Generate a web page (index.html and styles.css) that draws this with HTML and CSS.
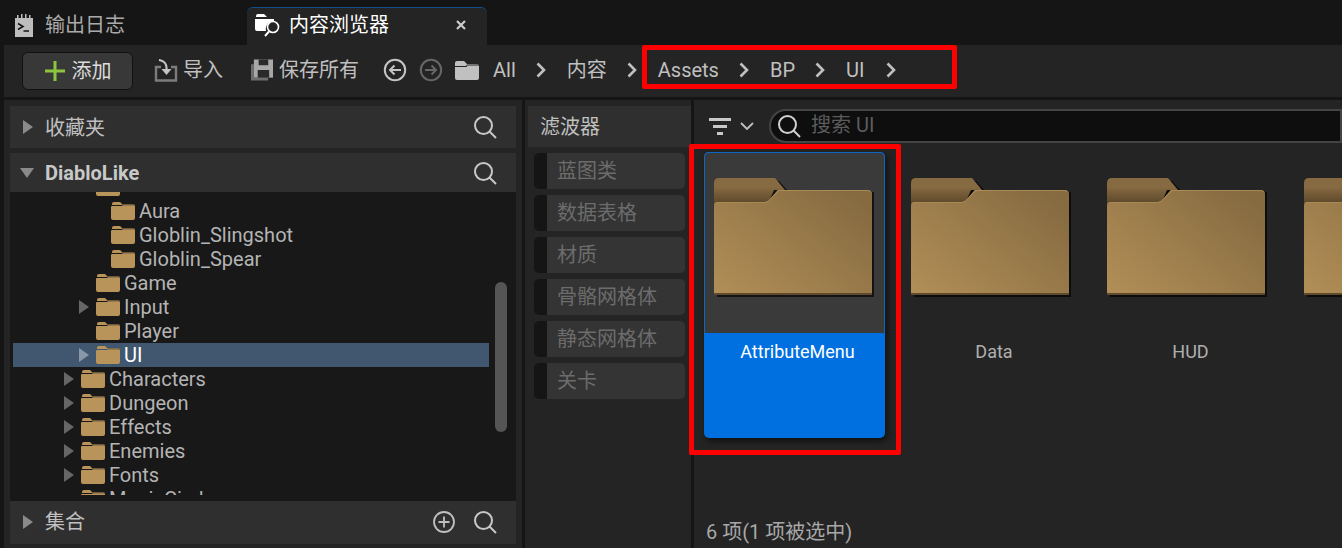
FILE: index.html
```html
<!DOCTYPE html>
<html lang="zh-CN">
<head>
    <meta charset="UTF-8">
    <meta name="viewport" content="width=device-width, initial-scale=1.0">
    <title>内容浏览器</title>
    <link rel="stylesheet" href="styles.css">
</head>
<body>
    <svg class="defs" aria-hidden="true">
        <defs>
            <linearGradient id="frontGrad" x1="0" y1="1" x2="1" y2="0.2">
                <stop offset="0" stop-color="#b28f57"/>
                <stop offset="1" stop-color="#866b41"/>
            </linearGradient>
            <linearGradient id="backGrad" x1="0" y1="0" x2="0" y2="1">
                <stop offset="0.35" stop-color="#866a41"/>
                <stop offset="1" stop-color="#594629"/>
            </linearGradient>
            <symbol id="bigFolder" viewBox="0 0 160 120">
                <path d="M2 119h158V14H74L64 3H5Q2 3 2 6z" fill="#000" opacity="0.65" transform="translate(1 0)"/>
                <path d="M0 5Q0 0 5 0H61L71 12H60L54 26H0z" fill="url(#backGrad)"/>
                <path d="M0 28Q0 24 4 24H51Q54 24 56 21L64 12H153Q158 12 158 17V117H0z" fill="url(#frontGrad)"/>
                <path d="M64 12H153Q158 12 158 17V18Q158 13 153 13H65L56 22Q54 25 51 25H4Q0 25 0 29V28Q0 24 4 24H51Q54 24 56 21z" fill="#a98a55"/>
                <rect x="0" y="115" width="158" height="2" fill="#5f4a2d"/>
            </symbol>
            <symbol id="treeFolder" viewBox="0 0 24 18">
                <path d="M1 2Q1 0 3 0H9L12 3H1z" fill="#b8945a"/>
                <path d="M0 5Q0 4 1 4H11L12.500 2.500H22Q24 2.500 24 4.500V16Q24 18 22 18H2Q0 18 0 16z" fill="#b8945a"/>
                <rect x="12" y="2.500" width="12" height="1" fill="#75603f"/>
            </symbol>
            <symbol id="search" viewBox="0 0 24 24">
                <circle cx="10.500" cy="10.500" r="8.500" fill="none" stroke="currentColor" stroke-width="2"/>
                <path d="M16.500 16.500L23 23" fill="none" stroke="currentColor" stroke-width="2"/>
            </symbol>
            <symbol id="chevron" viewBox="0 0 10 16">
                <path d="M1.500 1.500L8 8L1.500 14.500" fill="none" stroke="currentColor" stroke-width="2.600"/>
            </symbol>
        </defs>
    </svg>

    <div class="tabs">
        <div class="tab">
            <svg class="tab-icon" width="18" height="23" viewBox="0 0 18 23">
                <path d="M0 4H2V1H3.500V4H6V0H7.500V4H10V0H11.500V4H14V1H15.500V4H18V23H0z" fill="#bdbdbd"/>
                <path d="M3 9.500L8 12.500L3 15.500M8.500 17H14" fill="none" stroke="#151515" stroke-width="1.600"/>
            </svg>
            <span class="tab-name">输出日志</span>
        </div>
        <div class="tab active">
            <svg class="tab-icon" width="26" height="24" viewBox="0 0 26 24">
                <path d="M1 3Q1 1 3 1H9L12 4H1z" fill="#fff"/>
                <path d="M0 6H19V8A8 8 0 0 0 11 18H2Q0 18 0 16z" fill="#fff"/>
                <circle cx="18" cy="14" r="5.500" fill="none" stroke="#fff" stroke-width="1.600"/>
                <path d="M14 18.500L10 23" fill="none" stroke="#fff" stroke-width="2"/>
            </svg>
            <span class="tab-name">内容浏览器</span>
            <svg class="tab-close" width="10" height="10" viewBox="0 0 10 10">
                <path d="M1 1L9 9M9 1L1 9" fill="none" stroke="#ccc" stroke-width="2.200"/>
            </svg>
        </div>
    </div>

    <div class="toolbar">
        <button class="add-btn">
            <svg width="20" height="20" viewBox="0 0 20 20"><path d="M10 0V20M0 10H20" stroke="#8cc63f" stroke-width="3"/></svg>
            <span>添加</span>
        </button>
        <div class="tool import">
            <svg width="24" height="23" viewBox="0 0 24 23">
                <path d="M7 8H2V21.500H22V8H17" fill="none" stroke="#7c7c7c" stroke-width="2.400"/>
                <path d="M5 1C11 2 13 5 12.500 11" fill="none" stroke="#c4c4c4" stroke-width="2.200"/>
                <path d="M7.500 10H17.500L12.500 16z" fill="#c4c4c4"/>
            </svg>
            <span>导入</span>
        </div>
        <div class="tool save">
            <svg width="22" height="22" viewBox="0 0 23 22">
                <path d="M0 5H3V19H18V22H0z" fill="#6e6e6e"/>
                <path d="M3 0H23V19H3z" fill="#a8a8a8"/>
                <rect x="8" y="0" width="10" height="6" fill="#2a2a2a"/>
                <rect x="7" y="11" width="12" height="8" fill="#2a2a2a"/>
            </svg>
            <span>保存所有</span>
        </div>
        <svg class="nav back" width="24" height="24" viewBox="0 0 24 24">
            <circle cx="12" cy="12" r="10.200" fill="none" stroke="#c4c4c4" stroke-width="2"/>
            <path d="M18 12H7M11.500 7.500L7 12L11.500 16.500" fill="none" stroke="#c4c4c4" stroke-width="2"/>
        </svg>
        <svg class="nav forward" width="24" height="24" viewBox="0 0 24 24">
            <circle cx="12" cy="12" r="10.200" fill="none" stroke="#666" stroke-width="2"/>
            <path d="M6 12H17M12.500 7.500L17 12L12.500 16.500" fill="none" stroke="#666" stroke-width="2"/>
        </svg>
        <svg class="path-folder" width="24" height="19" viewBox="0 0 24 19">
            <path d="M0 2Q0 0 2 0H9L12 3H22Q24 3 24 5V17Q24 19 22 19H2Q0 19 0 17z" fill="#c0c0c0"/>
            <path d="M0 5H11L12 3.600H24V4.600H12.500L11.500 6H0z" fill="#242424"/>
        </svg>
        <nav class="crumbs">
            <span class="crumb">All</span><svg class="sep"><use href="#chevron"/></svg>
            <span class="crumb">内容</span><svg class="sep"><use href="#chevron"/></svg>
            <span class="crumb">Assets</span><svg class="sep"><use href="#chevron"/></svg>
            <span class="crumb">BP</span><svg class="sep"><use href="#chevron"/></svg>
            <span class="crumb">UI</span><svg class="sep"><use href="#chevron"/></svg>
        </nav>
        <div class="mark mark-path"></div>
    </div>

    <div class="workspace">
        <aside class="sources">
            <div class="section-head collapsed-head">
                <span class="arrow"></span>
                <span class="section-title">收藏夹</span>
                <svg class="head-icon"><use href="#search"/></svg>
            </div>
            <div class="section-head project-head">
                <span class="arrow down"></span>
                <span class="section-title project">DiabloLike</span>
                <svg class="head-icon"><use href="#search"/></svg>
            </div>
            <div class="tree">
                <div class="tree-rows">
                    <div class="row d2"><span class="twist none"></span><svg class="fold"><use href="#treeFolder"/></svg></div>
                    <div class="row d3"><span class="twist none"></span><svg class="fold"><use href="#treeFolder"/></svg><span>Aura</span></div>
                    <div class="row d3"><span class="twist none"></span><svg class="fold"><use href="#treeFolder"/></svg><span>Globlin_Slingshot</span></div>
                    <div class="row d3"><span class="twist none"></span><svg class="fold"><use href="#treeFolder"/></svg><span>Globlin_Spear</span></div>
                    <div class="row d2"><span class="twist none"></span><svg class="fold"><use href="#treeFolder"/></svg><span>Game</span></div>
                    <div class="row d2"><span class="twist"></span><svg class="fold"><use href="#treeFolder"/></svg><span>Input</span></div>
                    <div class="row d2"><span class="twist none"></span><svg class="fold"><use href="#treeFolder"/></svg><span>Player</span></div>
                    <div class="row d2 selected"><span class="twist"></span><svg class="fold"><use href="#treeFolder"/></svg><span>UI</span></div>
                    <div class="row d1"><span class="twist"></span><svg class="fold"><use href="#treeFolder"/></svg><span>Characters</span></div>
                    <div class="row d1"><span class="twist"></span><svg class="fold"><use href="#treeFolder"/></svg><span>Dungeon</span></div>
                    <div class="row d1"><span class="twist"></span><svg class="fold"><use href="#treeFolder"/></svg><span>Effects</span></div>
                    <div class="row d1"><span class="twist"></span><svg class="fold"><use href="#treeFolder"/></svg><span>Enemies</span></div>
                    <div class="row d1"><span class="twist"></span><svg class="fold"><use href="#treeFolder"/></svg><span>Fonts</span></div>
                    <div class="row d1"><span class="twist none"></span><svg class="fold"><use href="#treeFolder"/></svg><span>MagicCircle</span></div>
                </div>
                <div class="scrollbar"></div>
            </div>
            <div class="section-head collections-head">
                <span class="arrow"></span>
                <span class="section-title">集合</span>
                <svg class="head-plus" viewBox="0 0 22 22">
                    <circle cx="11" cy="11" r="10" fill="none" stroke="#c0c0c0" stroke-width="1.800"/>
                    <path d="M11 5.500V16.500M5.500 11H16.500" stroke="#c0c0c0" stroke-width="1.800"/>
                </svg>
                <svg class="head-icon"><use href="#search"/></svg>
            </div>
        </aside>

        <aside class="filters">
            <div class="filters-head">滤波器</div>
            <div class="filter">蓝图类</div>
            <div class="filter">数据表格</div>
            <div class="filter">材质</div>
            <div class="filter">骨骼网格体</div>
            <div class="filter">静态网格体</div>
            <div class="filter">关卡</div>
        </aside>

        <main class="content">
            <div class="search-row">
                <svg class="filter-icon" width="22" height="17" viewBox="0 0 22 17">
                    <path d="M0 1.500H22M4 8.500H18M8 15.500H14" stroke="#c8c8c8" stroke-width="3"/>
                </svg>
                <svg class="filter-drop" width="14" height="8" viewBox="0 0 14 8">
                    <path d="M1 1L7 7L13 1" fill="none" stroke="#c0c0c0" stroke-width="1.800"/>
                </svg>
                <div class="search-box">
                    <svg class="search-glass"><use href="#search"/></svg>
                    <span class="search-text">搜索 UI</span>
                </div>
            </div>
            <div class="tiles">
                <div class="tile selected-tile">
                    <div class="thumb"><svg class="big-folder"><use href="#bigFolder"/></svg></div>
                    <div class="tile-name">AttributeMenu</div>
                </div>
                <div class="tile">
                    <div class="thumb"><svg class="big-folder"><use href="#bigFolder"/></svg></div>
                    <div class="tile-name">Data</div>
                </div>
                <div class="tile">
                    <div class="thumb"><svg class="big-folder"><use href="#bigFolder"/></svg></div>
                    <div class="tile-name">HUD</div>
                </div>
                <div class="tile">
                    <div class="thumb"><svg class="big-folder"><use href="#bigFolder"/></svg></div>
                    <div class="tile-name"></div>
                </div>
            </div>
            <div class="status">6 项(1 项被选中)</div>
        </main>
        <div class="mark mark-tile"></div>
    </div>
</body>
</html>
```

FILE: styles.css
```css
* {
    box-sizing: border-box;
}
html, body {
    height: 100%;
}
body {
    margin: 0;
    width: 1342px;
    height: 548px;
    overflow: hidden;
    background-color: #151515;
    color: #c0c0c0;
    font-family: Roboto, "Noto Sans CJK SC", sans-serif;
    font-size: 20px;
    line-height: 24px;
}
svg {
    display: block;
    flex: none;
}
.defs {
    position: absolute;
    width: 0;
    height: 0;
}

/* tabs */
.tabs {
    display: flex;
    height: 45px;
    padding-top: 7px;
}
.tab {
    display: flex;
    align-items: center;
    width: 247px;
    padding: 0 0 2px 15px;
    color: #aaa;
}
.tab-name {
    margin-left: 12px;
}
.tab.active {
    width: 240px;
    padding: 0 0 4px 8px;
    color: #fff;
    background-color: #242424;
    border-top: 1px solid #0f4f8f;
    border-radius: 6px 6px 0 0;
}
.tab.active .tab-name {
    margin-left: 8px;
}
.tab-close {
    margin-left: 67px;
}

/* toolbar */
.toolbar {
    position: relative;
    display: flex;
    align-items: center;
    height: 52px;
    margin-left: 4px;
    padding-left: 18px;
    background-color: #242424;
}
.add-btn {
    display: flex;
    align-items: center;
    justify-content: center;
    gap: 7px;
    width: 111px;
    height: 38px;
    padding: 0 0 0 1px;
    background-color: #383838;
    border: 1px solid #111;
    border-radius: 6px;
    color: #ddd;
    font: inherit;
}
.tool {
    display: flex;
    align-items: center;
    gap: 5px;
    margin-top: -2px;
}
.import {
    margin-left: 21px;
}
.save {
    margin-left: 28px;
    gap: 6px;
}
.nav {
    margin-top: -2px;
}
.back {
    margin-left: 24px;
}
.forward {
    margin-left: 12px;
}
.path-folder {
    margin-left: 12px;
    margin-top: -2px;
}
.crumbs {
    display: flex;
    align-items: center;
    margin-top: -2px;
    margin-left: 14px;
}
.sep {
    width: 10px;
    height: 16px;
    margin: 0 21px 0 20px;
    color: #c0c0c0;
}
.sep:last-child {
    margin-left: 22px;
}

/* red annotation frames */
.mark {
    position: absolute;
    border: 5px solid #ff0000;
    border-radius: 2px;
    pointer-events: none;
}
.mark-path {
    left: 638px;
    top: 0;
    width: 315px;
    height: 44px;
}
.mark-tile {
    left: 685px;
    top: 44px;
    width: 212px;
    height: 311px;
}

/* main area */
.workspace {
    position: relative;
    display: flex;
    height: 448px;
    margin-top: 3px;
    margin-left: 4px;
}
.sources {
    display: flex;
    flex-direction: column;
    width: 518px;
    padding: 6px 6px 4px 6px;
    background-color: #242424;
}
.section-head {
    display: flex;
    align-items: center;
    flex: none;
    padding: 0 19px 0 9px;
    background-color: #2f2f2f;
}
.collapsed-head {
    height: 42px;
    margin-bottom: 5px;
}
.project-head {
    height: 39px;
}
.collections-head {
    height: 43px;
    padding-bottom: 2px;
}
.arrow {
    width: 0;
    height: 0;
    border-left: 10px solid #8a8a8a;
    border-top: 7.5px solid transparent;
    border-bottom: 7.5px solid transparent;
    margin-left: 4px;
}
.arrow.down {
    margin-left: 1px;
    border-left: 7.5px solid transparent;
    border-right: 7.5px solid transparent;
    border-top: 10px solid #8a8a8a;
    border-bottom: 0;
}
.section-title {
    flex: 1;
    margin-left: 12px;
}
.collapsed-head .section-title {
    padding-top: 2px;
}
.section-title.project {
    margin-left: 11px;
    font-weight: bold;
    color: #c8c8c8;
}
.head-icon {
    width: 24px;
    height: 24px;
    color: #c8c8c8;
}
.head-plus {
    width: 22px;
    height: 22px;
    margin-right: 18px;
}

/* folder tree */
.tree {
    position: relative;
    flex: 1;
    padding-left: 3px;
    overflow: hidden;
    background-color: #181818;
}
.tree-rows {
    width: 476px;
    height: 320px;
    margin-top: -17px;
    overflow: hidden;
}
.row {
    display: flex;
    align-items: center;
    height: 24px;
    color: #b4b4b4;
}
.row.d1 {
    padding-left: 51px;
}
.row.d2 {
    padding-left: 66px;
}
.row.d3 {
    padding-left: 81px;
}
.row.selected {
    background-color: #41566f;
    color: #fff;
}
.twist {
    width: 17px;
    height: 0;
    border-left: 10px solid #666;
    border-top: 7.5px solid transparent;
    border-bottom: 7.5px solid transparent;
}
.twist.none {
    border-left-color: transparent;
}
.selected .twist {
    border-left-color: #8a97a6;
}
.fold {
    width: 24px;
    height: 18px;
    margin-right: 4px;
}
.scrollbar {
    position: absolute;
    right: 9px;
    top: 90px;
    width: 12px;
    height: 150px;
    background-color: #555;
    border-radius: 6px;
}

/* filter list */
.filters {
    width: 166px;
    margin-left: 3px;
    padding: 6px 0 0 3px;
    background-color: #242424;
}
.filters-head {
    height: 41px;
    margin-bottom: 6px;
    padding: 9px 0 0 12px;
    background-color: #2f2f2f;
}
.filter {
    height: 36px;
    margin: 0 6px 6px 6px;
    padding: 6px 0 0 23px;
    color: #6c6c6c;
    background: linear-gradient(to right, #151515 13px, #343434 13px);
    border-radius: 5px;
}

/* asset view */
.content {
    position: relative;
    flex: 1;
    margin-left: 3px;
    padding-top: 9px;
    background-color: #242424;
    overflow: hidden;
}
.search-row {
    display: flex;
    align-items: center;
    height: 34px;
}
.filter-icon {
    margin-left: 15px;
}
.filter-drop {
    margin-left: 9px;
}
.search-box {
    display: flex;
    align-items: center;
    gap: 10px;
    width: 700px;
    height: 34px;
    margin-left: 15px;
    padding-left: 6px;
    color: #5c5c5c;
    background-color: #0e0e0e;
    border: 2px solid #444;
    border-radius: 17px 0 0 17px;
}
.search-glass {
    width: 24px;
    height: 24px;
    color: #d0d0d0;
}
.search-text {
    margin-top: -2px;
}
.tiles {
    display: grid;
    grid-template-columns: repeat(4, 181px);
    column-gap: 15.5px;
    margin: 9px 0 0 10px;
}
.tile {
    height: 286px;
    border-radius: 5px;
    overflow: hidden;
}
.thumb {
    height: 181px;
    padding: 26px 0 0 10px;
}
.big-folder {
    width: 160px;
    height: 120px;
}
.tile-name {
    padding: 7px 0 0 6px;
    text-align: center;
    font-size: 18px;
    color: #b0b0b0;
}
.selected-tile {
    background-color: #0070e0;
    box-shadow: 2px 3px 6px rgba(0, 0, 0, 0.6);
    overflow: visible;
}
.selected-tile .thumb {
    background-color: #3a3a3a;
    border: 1px solid #0c66c4;
    border-bottom: 0;
    border-radius: 5px 5px 0 0;
    padding: 25px 0 0 9px;
}
.selected-tile .tile-name {
    color: #fff;
}
.status {
    margin: 82px 0 0 12px;
    color: #a8a8a8;
}
```
